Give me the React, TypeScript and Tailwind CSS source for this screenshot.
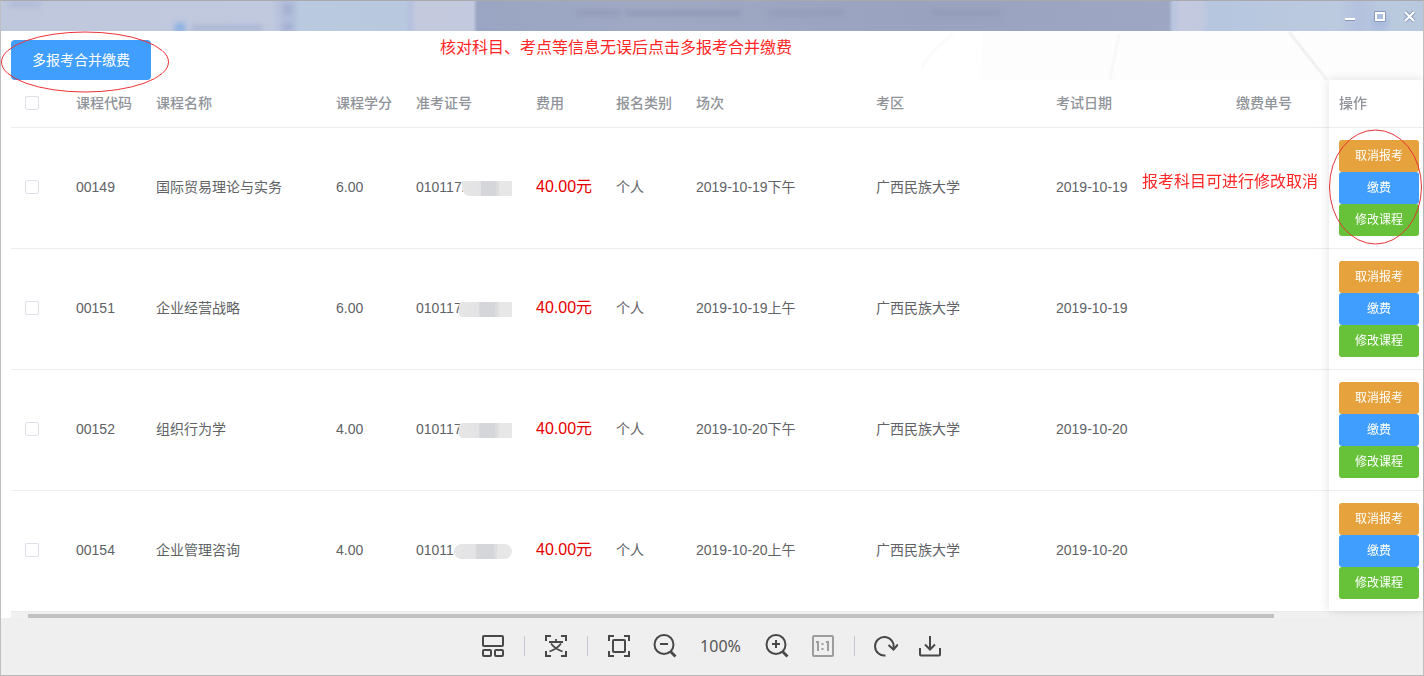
import React from "react";

type Course = {
  code: string;
  name: string;
  credit: string;
  ticket: string;
  mask: string;
  session: string;
  date: string;
};

const courses: Course[] = [
  { code: "00149", name: "国际贸易理论与实务", credit: "6.00", ticket: "0101172", mask: "w-[50px] rounded-bl-lg", session: "2019-10-19下午", date: "2019-10-19" },
  { code: "00151", name: "企业经营战略", credit: "6.00", ticket: "010117", mask: "w-[53px] rounded-l-sm", session: "2019-10-19上午", date: "2019-10-19" },
  { code: "00152", name: "组织行为学", credit: "4.00", ticket: "010117", mask: "w-[53px] rounded-l-sm", session: "2019-10-20下午", date: "2019-10-20" },
  { code: "00154", name: "企业管理咨询", credit: "4.00", ticket: "01011", mask: "w-[58px] rounded-full", session: "2019-10-20上午", date: "2019-10-20" },
];

const headings = ["课程代码", "课程名称", "课程学分", "准考证号", "费用", "报名类别", "场次", "考区", "考试日期", "缴费单号"];

function Check({ label }: { label: string }) {
  return (
    <input
      type="checkbox"
      aria-label={label}
      className="block size-3.5 appearance-none rounded-xs border border-[#dcdfe6] bg-white checked:bg-[#409eff]"
    />
  );
}

function TitleBar() {
  return (
    <header className="relative flex h-[30px] shrink-0 items-center justify-end overflow-hidden bg-[linear-gradient(90deg,#bfc7dc_0%,#c1c9df_19%,#b1bddb_20%,#b1bfdc_20.5%,#b9c9df_21%,#b8c8df_28.4%,#b5c1df_28.8%,#c4c9de_29.2%,#c3c9de_33.2%,#99a5c2_33.5%,#9fa9c4_45%,#99a3bf_65%,#9da7c3_82.1%,#b8c5de_82.4%,#c4c9df_83%,#c2c9df_84.4%,#b6c6df_85%,#bbcadf_94%,#b3c1df_95.5%,#bacade_97%,#b8c8de_100%)]">
      <svg className="absolute inset-0 size-full" viewBox="0 0 1422 30" preserveAspectRatio="none" aria-hidden="true">
        <defs>
          <filter id="frost" x="-20%" y="-100%" width="140%" height="300%">
            <feGaussianBlur stdDeviation="2.5" />
          </filter>
        </defs>
        <g filter="url(#frost)">
          <rect x="8" y="1" width="32" height="5" fill="#a2afd3" opacity=".6" />
          <circle cx="179" cy="27" r="6" fill="#8eb2e2" />
          <rect x="191" y="24" width="70" height="6" fill="#9caacb" opacity=".6" />
          <rect x="282" y="4" width="9" height="9" fill="#9ba7cd" opacity=".6" />
          <rect x="282" y="22" width="9" height="8" fill="#9ba7cd" opacity=".6" />
          <rect x="575" y="9" width="45" height="6" fill="#858fae" opacity=".4" />
          <rect x="625" y="9" width="115" height="6" fill="#858fae" opacity=".5" />
          <rect x="767" y="9" width="76" height="6" fill="#858fae" opacity=".3" />
          <rect x="931" y="9" width="70" height="6" fill="#858fae" opacity=".3" />
          <circle cx="1379" cy="21" r="9" fill="#a4b7df" opacity=".7" />
        </g>
      </svg>
      <div className="relative flex items-center gap-1.5 pr-px">
        <button type="button" aria-label="最小化" className="size-6">
          <svg viewBox="0 0 24 24" className="size-6" shapeRendering="crispEdges">
            <rect x="7" y="14" width="10" height="3" fill="#8997b7" />
            <rect x="7" y="14" width="10" height="2" fill="white" />
          </svg>
        </button>
        <button type="button" aria-label="最大化" className="size-6">
          <svg viewBox="0 0 24 24" className="size-6" fill="none">
            <path d="M6.500 7.500h11v10h-11z" stroke="#8b9aba" />
            <path d="M8 9h8v7H8z" stroke="white" strokeWidth="2" />
          </svg>
        </button>
        <button type="button" aria-label="关闭" className="size-6">
          <svg viewBox="0 0 24 24" className="size-6" fill="none">
            <path d="m7 8 9 9m0-9-9 9" stroke="#8999b8" strokeWidth="4" />
            <path d="m7 8 9 9m0-9-9 9" stroke="white" strokeWidth="2.200" />
          </svg>
        </button>
      </div>
    </header>
  );
}

function CourseTable() {
  return (
    <table className="w-full min-w-[1300px] table-fixed border-collapse text-left text-sm text-[#606266]">
      <colgroup>
        <col className="w-[55px]" />
        <col className="w-[80px]" />
        <col className="w-[180px]" />
        <col className="w-[80px]" />
        <col className="w-[120px]" />
        <col className="w-[80px]" />
        <col className="w-[80px]" />
        <col className="w-[180px]" />
        <col className="w-[180px]" />
        <col className="w-[180px]" />
        <col />
      </colgroup>
      <thead>
        <tr className="h-[47px] border-b border-[#ededf0] text-[#909399]">
          <th className="pl-3.5"><Check label="全选" /></th>
          {headings.map((h) => (
            <th key={h} className="px-2.5 font-medium">{h}</th>
          ))}
        </tr>
      </thead>
      <tbody>
        {courses.map((c) => (
          <tr key={c.code} className="h-[121px] border-b border-[#ededf0] last:border-b-0">
            <td className="pb-0.5 pl-3.5"><Check label={c.name} /></td>
            <td className="px-2.5 pb-0.5">{c.code}</td>
            <td className="px-2.5 pb-0.5">{c.name}</td>
            <td className="px-2.5 pb-0.5">{c.credit}</td>
            <td className="relative px-2.5 pb-0.5">
              {c.ticket}
              <span className={"absolute right-3.5 top-[53px] h-[15px] bg-[linear-gradient(90deg,#e6e6e7_0,#e3e3e5_38%,#d5d6d9_39%,#d5d6d9_68%,#dddddf_69%,#dddddf_74%,#e7e7e8_75%)] " + c.mask} />
            </td>
            <td className="px-2.5 pb-0.5 text-base text-[#e60000]">40.00元</td>
            <td className="px-2.5 pb-0.5">个人</td>
            <td className="px-2.5 pb-0.5">{c.session}</td>
            <td className="px-2.5 pb-0.5">广西民族大学</td>
            <td className="px-2.5 pb-0.5">{c.date}</td>
            <td className="px-2.5 pb-0.5" />
          </tr>
        ))}
      </tbody>
    </table>
  );
}

function ActionTable() {
  return (
    <table className="relative w-[94px] shrink-0 table-fixed border-collapse bg-white text-left text-sm shadow-[0_0_10px_rgba(0,0,0,0.12)]">
      <thead>
        <tr className="h-[47px] border-b border-[#ededf0] text-[#909399]">
          <th className="px-2.5 font-medium">操作</th>
        </tr>
      </thead>
      <tbody>
        {courses.map((c) => (
          <tr key={c.code} className="h-[121px] border-b border-[#ededf0] last:border-b-0">
            <td className="pl-2.5">
              <div className="flex w-20 flex-col text-xs text-white">
                <button type="button" className="h-8 rounded-[3px] bg-[#e6a23c]">取消报考</button>
                <button type="button" className="h-8 rounded-[3px] bg-[#409eff]">缴费</button>
                <button type="button" className="h-8 rounded-[3px] bg-[#67c23a]">修改课程</button>
              </div>
            </td>
          </tr>
        ))}
      </tbody>
    </table>
  );
}

function Tool({ label, children, muted }: { label: string; children: React.ReactNode; muted?: boolean }) {
  return (
    <button type="button" aria-label={label} className={muted ? "size-6 text-[#9d9d9d]" : "size-6 text-[#484848]"}>
      <svg viewBox="0 0 24 24" className="size-6" fill="none" stroke="currentColor" strokeWidth="2">
        {children}
      </svg>
    </button>
  );
}

function Divider() {
  return <span className="h-5 w-px bg-[#c5c8d3]" />;
}

function Toolbar() {
  return (
    <footer className="flex min-h-[57px] flex-1 items-center justify-center gap-[19px] bg-[#efefef] pb-0.5 pr-0.5">
      <Tool label="缩略图">
        <rect x="2" y="2" width="20" height="10" rx="1" />
        <rect x="2" y="16" width="8" height="6" rx="1" />
        <rect x="14" y="16" width="8" height="6" rx="1" />
      </Tool>
      <Divider />
      <Tool label="翻译">
        <path d="M2 7V2h5M17 2h5v5M22 17v5h-5M7 22H2v-5" />
        <path d="M12 5v3M5 8h14M7 9.500q4 5.500 11.500 8M17 9.500q-4 5.500-11.500 8" strokeWidth="1.800" />
      </Tool>
      <Divider />
      <div className="flex items-center gap-[22px]">
        <Tool label="适应窗口">
          <path d="M2 7V2h5M17 2h5v5M22 17v5h-5M7 22H2v-5" />
          <rect x="6" y="6" width="12" height="12" rx="1" />
        </Tool>
        <Tool label="缩小">
          <circle cx="11" cy="10.500" r="9.500" />
          <path d="M7 10h8" />
          <path d="m17.500 17.500 5 5" strokeWidth="2.800" />
        </Tool>
        <span className="w-11 text-center font-['Noto_Sans',sans-serif] text-base text-[#555555]">100%</span>
        <Tool label="放大">
          <circle cx="11" cy="10.500" r="9.500" />
          <path d="M7 10h8M11 6v8" />
          <path d="m17.500 17.500 5 5" strokeWidth="2.800" />
        </Tool>
        <Tool label="原始大小" muted>
          <rect x="2" y="2" width="20" height="20" rx="1" />
          <path d="M5 8h2v9M15 8h2v9M11.500 9v2M11.500 14v2" />
        </Tool>
      </div>
      <Divider />
      <div className="flex items-center gap-5">
        <Tool label="旋转">
          <path d="M11.500 21.500A9.300 9.300 0 1 1 19.500 14" />
          <path d="m14.500 11 5 4.500 4.500-5" />
        </Tool>
        <Tool label="下载">
          <path d="M2 14v6.500q0 1 1 1h18q1 0 1-1V14M12 2v13M7 10.500l5 5 5-5" />
        </Tool>
      </div>
    </footer>
  );
}

export default function App() {
  return (
    <div className="flex min-h-screen flex-col border border-t-[#a9a9ac] border-b-[#b8b8b8] border-x-[#bebfc3] bg-white font-['Liberation_Sans','Noto_Sans_CJK_SC',sans-serif]">
      <TitleBar />
      <main className="relative pl-2.5 pt-[9px]">
        <svg className="absolute right-0 top-0 h-[49px] w-[530px]" viewBox="0 0 530 49" fill="none" aria-hidden="true">
          <path d="M90 0h440v49H87z" fill="#fdfdfd" />
          <path d="M60 3Q32 25 29 38" stroke="#fbfbfb" strokeWidth="3" />
          <path d="m226 3-9 46" stroke="#f8f8f8" strokeWidth="3" />
          <path d="m396 1 38 48" stroke="#f2f2f3" strokeWidth="3" />
        </svg>
        <button type="button" className="relative block h-10 w-[140px] rounded bg-[#409eff] text-sm text-white">
          多报考合并缴费
        </button>
        <div className="flex">
          <div className="min-w-0 flex-1 overflow-hidden">
            <CourseTable />
          </div>
          <ActionTable />
        </div>
        <div className="h-[7px] border-t border-[#ebebeb] bg-[#f1f1f1] pl-[17px] pt-0.5">
          <div className="h-1 w-[89.300%] bg-[#c1c1c1]" />
        </div>

        <p className="absolute left-[439px] top-[5px] text-base text-[#ff2626]">
          核对科目、考点等信息无误后点击多报考合并缴费
        </p>
        <p className="absolute right-[105px] top-[139px] text-base text-[#ff2626]">报考科目可进行修改取消</p>
        <svg className="pointer-events-none absolute left-0 top-0 h-[62px] w-[170px]" viewBox="0 0 170 62" fill="none" aria-hidden="true">
          <ellipse cx="84" cy="31" rx="83.500" ry="30" stroke="#ed3338" />
        </svg>
        <svg className="pointer-events-none absolute right-0 top-[98px] h-[116px] w-[94px]" viewBox="0 0 94 116" fill="none" aria-hidden="true">
          <ellipse cx="46.500" cy="58" rx="46" ry="57" stroke="#e23437" />
        </svg>
      </main>
      <Toolbar />
    </div>
  );
}
